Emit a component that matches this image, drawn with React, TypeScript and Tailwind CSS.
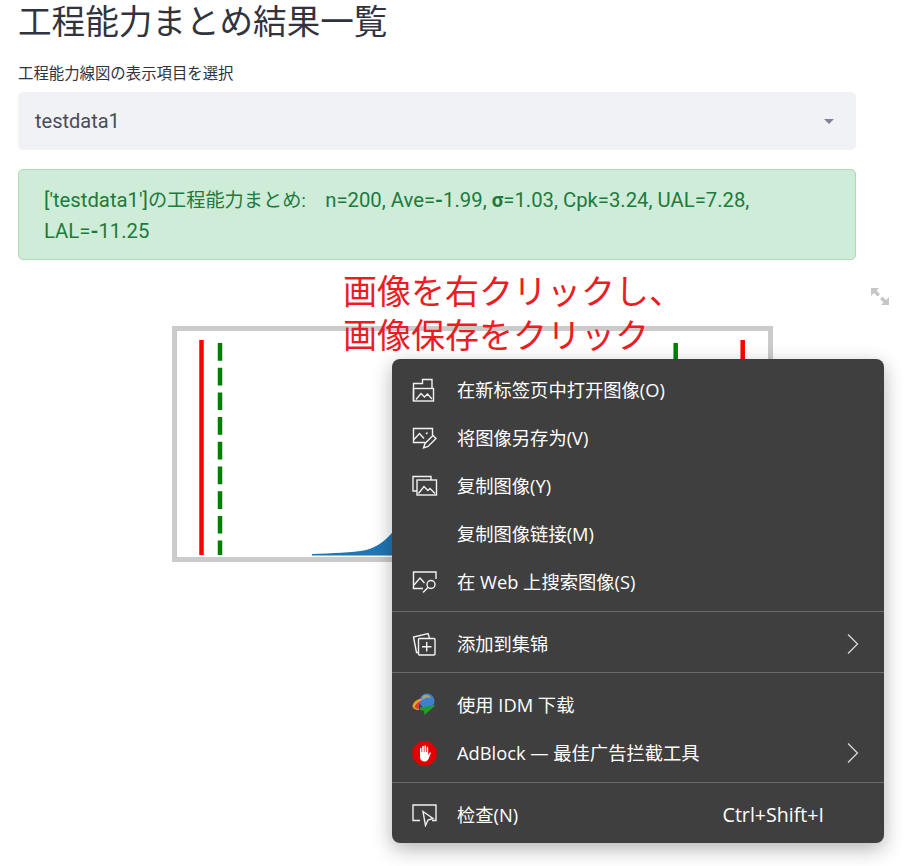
import type { ReactNode } from "react";

const sans = { fontFamily: '"Roboto", "Noto Sans CJK JP", sans-serif' };

function OpenIcon() {
  return (
    <svg width="24" height="24" viewBox="0 0 24 24" fill="none" stroke="#f2f2f2" strokeWidth="1.4">
      <path d="M1.500 23V5.500H10.500V1.500H20V10" />
      <rect x="1.500" y="10.500" width="20" height="12.500" />
      <path d="M4 21.500L9 15.500L12.500 19L15.500 16L20 21" />
    </svg>
  );
}

function SaveIcon() {
  return (
    <svg width="25" height="24" viewBox="0 0 25 24" fill="none" stroke="#f2f2f2" strokeWidth="1.4">
      <path d="M13 16.500H1.500V2.500H20.500V9" />
      <path d="M2 13.500L7.500 7.500L12 12.500M14 8L15.500 6.500" />
      <path d="M11.500 22L13 17.500L21 9.500L24 12.500L16 20.500Z" />
    </svg>
  );
}

function CopyIcon() {
  return (
    <svg width="26" height="24" viewBox="0 0 26 24" fill="none" stroke="#f2f2f2" strokeWidth="1.4">
      <path d="M5 17H1V2.500H19V6" />
      <rect x="5" y="6" width="19.500" height="15" />
      <path d="M6.500 19.500L12 12.500L16 16.500L18 14.500L23 19.500" />
    </svg>
  );
}

function SearchImageIcon() {
  return (
    <svg width="25" height="24" viewBox="0 0 25 24" fill="none" stroke="#f2f2f2" strokeWidth="1.4">
      <path d="M11 18.500H1.500V2H24V9" />
      <path d="M2 15L8 8L12.500 13" />
      <circle cx="19" cy="14.500" r="4" />
      <path d="M16 17.500L11 22.500" />
    </svg>
  );
}

function CollectionIcon() {
  return (
    <svg width="24" height="24" viewBox="0 0 24 24" fill="none" stroke="#f2f2f2" strokeWidth="1.4">
      <path d="M7 20.500H4.500L1.500 5L16 1.500L17.500 6" />
      <rect x="6.500" y="6.500" width="16.500" height="16.500" rx="1" />
      <path d="M14.700 10V19.500M10 14.700H19.500" />
    </svg>
  );
}

function IdmIcon() {
  return (
    <svg width="24" height="24" viewBox="0 0 24 24">
      <circle cx="15" cy="8" r="7.500" fill="#3f7fd0" />
      <path d="M10 4C12 0.500 18 1 19 5.500C16 3.500 13 4.500 11 7Z" fill="#a5a860" />
      <path d="M0.500 13C1.500 8 7 5 11 6C7 8 6 12 7 17C3 17 0.500 15 0.500 13Z" fill="#e8a420" />
      <path d="M2.500 14C3.500 11 6 9 9 8C7 11 7 13 7.500 16C5 16 3.500 15 2.500 14Z" fill="#d8402c" />
      <path d="M8 14.500L24 12L12.500 22L12 18L8 17Z" fill="#1f9e2a" />
    </svg>
  );
}

function AdBlockIcon() {
  return (
    <svg width="25" height="25" viewBox="0 0 25 25">
      <path d="M7.500 0.500H17.500L24.500 7.500V17.500L17.500 24.500H7.500L0.500 17.500V7.500Z" fill="#e40000" />
      <path
        d="M8 12V7.500C8 6.500 9.500 6.500 9.500 7.500V11H10.200V5.500C10.200 4.500 11.800 4.500 11.800 5.500V11H12.500V5C12.500 4 14 4 14 5V11H14.700V6.500C14.700 5.500 16.200 5.500 16.200 6.500V14L17.500 11.800C18.200 11 19.300 11.600 18.800 12.600L16.500 18C15.500 20 14 20.500 12.500 20.500C10 20.500 8 18.800 8 16Z"
        fill="#ffffff"
      />
    </svg>
  );
}

function InspectIcon() {
  return (
    <svg width="25" height="24" viewBox="0 0 25 24" fill="none" stroke="#f2f2f2" strokeWidth="1.4">
      <path d="M8 17.500H1V2H24V17.500H20" />
      <path d="M11 8.500L21 15.500L16 17L13.500 22.500Z" />
    </svg>
  );
}

function Chevron() {
  return (
    <svg className="mr-[25px]" width="12" height="20" viewBox="0 0 12 20" fill="none" stroke="#d8d8d8" strokeWidth="1.300">
      <path d="M1 0.500L10.500 10L1 19.500" />
    </svg>
  );
}

function MenuItem({ icon, label, hint, more }: { icon?: ReactNode; label: string; hint?: string; more?: boolean }) {
  return (
    <div className="flex h-12 items-center text-[18.3px] text-white">
      <div className="flex w-[65px] shrink-0 items-center pl-5">{icon}</div>
      <span className="flex-1 whitespace-nowrap">{label}</span>
      {hint && <span className="mr-[60px] whitespace-nowrap text-[19.6px]">{hint}</span>}
      {more && <Chevron />}
    </div>
  );
}

function Chart() {
  return (
    <svg className="blur-[0.5px]" width="601" height="236" viewBox="0 0 601 236" fill="none">
      <rect x="2.500" y="2.500" width="596" height="231" stroke="#cbcbcb" strokeWidth="5" />
      <path d="M29.500 14V229" stroke="#ff0000" strokeWidth="4.500" />
      <path d="M48 17V229" stroke="#008000" strokeWidth="4.500" strokeDasharray="17.700 7" />
      <path d="M503.700 17V60" stroke="#008000" strokeWidth="4.500" />
      <path d="M570.700 14V60" stroke="#ff0000" strokeWidth="4.500" />
      <path d="M140 228C160 227 180 227 194 224C205 221 215 214 224 202V229.500H140Z" fill="#1f77b4" />
    </svg>
  );
}

export default function App() {
  return (
    <div className="relative h-[866px] w-[907px] overflow-hidden bg-white" style={sans}>
      <div className="w-[856px] pl-[18px]">
        <h1 className="h-[46px] text-[33.6px] leading-[46px] text-[#31333f]">工程能力まとめ結果一覧</h1>
        <p className="mt-[18px] h-5 text-[15.4px] leading-5 text-[#31333f]">工程能力線図の表示項目を選択</p>
        <div className="mt-2 flex h-[58px] items-center justify-between rounded-[5px] bg-[#f0f2f6] pl-[17px] pr-[22px] text-[20px] text-[#4a4c57]">
          <span>testdata1</span>
          <span className="h-0 w-0 border-x-[5px] border-t-[5px] border-x-transparent border-t-[#808495]" />
        </div>
        <div className="mt-[19px] h-[91px] rounded-[5px] border border-[#a9dcb9] bg-[#cfecd8] py-[15px] pl-[25px] pr-[60px] text-[20.3px] leading-[30px] text-[#1c7a3e]">
          ['testdata1']<span className="text-[19.2px]">の工程能力まとめ:　</span>n=200, Ave=<b className="font-bold">-</b>1.99, <b className="font-bold">σ</b>=1.03, Cpk=3.24, UAL=7.28, LAL=<b className="font-bold">-</b>11.25
        </div>
        <div className="ml-[154px] mt-[66px] w-[601px]">
          <Chart />
        </div>
      </div>

      <svg className="absolute left-[870px] top-[287px]" width="20" height="19" viewBox="0 0 20 19" fill="#c6c6c6">
        <path d="M1 1H9L6.500 3.500L10 7L7.500 9.500L4 6L1 9Z" />
        <path d="M19 18H11L13.500 15.500L10 12L12.500 9.500L16 13L19 10Z" />
      </svg>

      <div className="absolute left-[343px] top-[270px] text-[34px] leading-[44px] text-[#ed1c24]">
        <div>画像を右クリックし、</div>
        <div>画像保存をクリック</div>
      </div>

      <div
        className="absolute left-[392px] top-[359px] h-[484px] w-[492px] rounded-[8px] bg-[#3f3f3f] pt-[7px] shadow-[0_6px_20px_rgba(0,0,0,0.3)]"
        style={{ fontFamily: '"Open Sans", "Noto Sans CJK SC", sans-serif' }}
      >
        <MenuItem icon={<OpenIcon />} label="在新标签页中打开图像(O)" />
        <MenuItem icon={<SaveIcon />} label="将图像另存为(V)" />
        <MenuItem icon={<CopyIcon />} label="复制图像(Y)" />
        <MenuItem label="复制图像链接(M)" />
        <MenuItem icon={<SearchImageIcon />} label="在 Web 上搜索图像(S)" />
        <div className="mb-2 mt-[5px] h-px bg-[#6a6a6a]" />
        <MenuItem icon={<CollectionIcon />} label="添加到集锦" more />
        <div className="mb-2 mt-1 h-px bg-[#6a6a6a]" />
        <MenuItem icon={<IdmIcon />} label="使用 IDM 下载" />
        <MenuItem icon={<AdBlockIcon />} label="AdBlock — 最佳广告拦截工具" more />
        <div className="mb-2 mt-[5px] h-px bg-[#6a6a6a]" />
        <MenuItem icon={<InspectIcon />} label="检查(N)" hint="Ctrl+Shift+I" />
      </div>
    </div>
  );
}
